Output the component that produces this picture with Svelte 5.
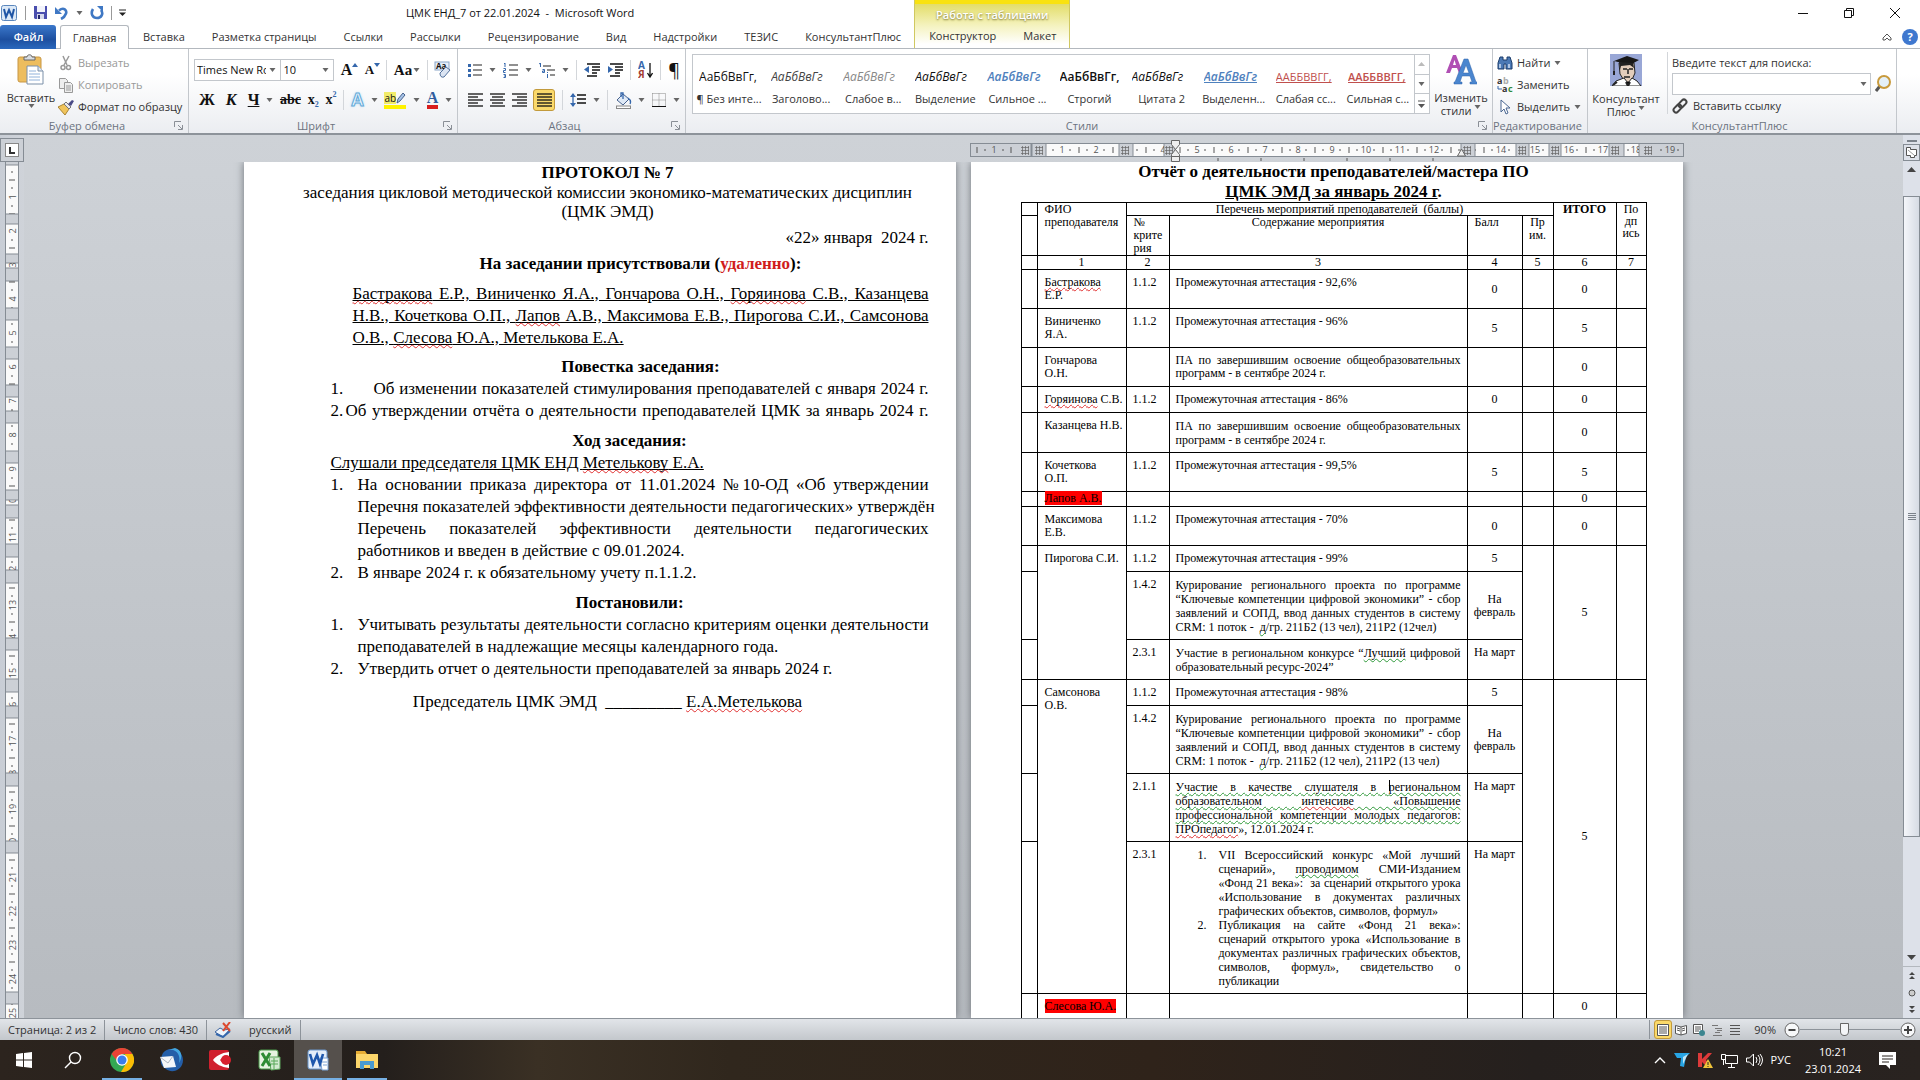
<script>
    const tabs = ['Вставка', 'Разметка страницы', 'Ссылки', 'Рассылки', 'Рецензирование', 'Вид', 'Надстройки', 'ТЕЗИС', 'КонсультантПлюс'];

    const styles = [
        { name: '¶ Без инте...', look: 'plain', sample: 'АаБбВвГг,' },
        { name: 'Заголово...', look: 'heading', sample: 'АаБбВвГг' },
        { name: 'Слабое в...', look: 'subtle', sample: 'АаБбВвГг' },
        { name: 'Выделение', look: 'emphasis', sample: 'АаБбВвГг' },
        { name: 'Сильное ...', look: 'intense', sample: 'АаБбВвГг' },
        { name: 'Строгий', look: 'strong', sample: 'АаБбВвГг,' },
        { name: 'Цитата 2', look: 'emphasis', sample: 'АаБбВвГг' },
        { name: 'Выделенн...', look: 'intense lined', sample: 'АаБбВвГг' },
        { name: 'Слабая сс...', look: 'reference', sample: 'ААББВВГГ,' },
        { name: 'Сильная с...', look: 'reference bold', sample: 'ААББВВГГ,' },
    ];

    // ~word~ is a spelling mark, ^word^ is a grammar mark
    const attendees = [
        '~Бастракова~ Е.Р., Виниченко Я.А., Гончарова О.Н., ~Горяинова~ С.В., Казанцева',
        'Н.В., Кочеткова О.П., ~Лапов~ А.В., Максимова Е.В., Пирогова С.И., Самсонова',
        'О.В., ~Слесова~ Ю.А., Метелькова Е.А.',
    ];

    const course = [
        [
            'На основании приказа директора от 11.01.2024 №10-ОД «Об утверждении',
            'Перечня показателей эффективности деятельности педагогических» утверждён',
            'Перечень показателей эффективности деятельности педагогических',
            'работников и введен в действие с 09.01.2024.',
        ],
        ['В январе 2024 г. к обязательному учету п.1.1.2.'],
    ];

    const decisions = [
        [
            'Учитывать результаты деятельности согласно критериям оценки деятельности',
            'преподавателей в надлежащие месяцы календарного года.',
        ],
        ['Утвердить отчет о деятельности преподавателей за январь 2024 г.'],
    ];

    const exam = (value) => ({ code: '1.1.2', lines: ['Промежуточная аттестация - ' + value] });
    const september = { code: '', lines: ['ПА по завершившим освоение общеобразовательных', 'программ - в сентябре 2024 г.'], score: '' };
    const project = (tail) => ({
        code: '1.4.2',
        tall: true,
        lines: [
            'Курирование регионального проекта по программе',
            '“Ключевые компетенции цифровой экономики” - сбор',
            'заявлений и СОПД, ввод данных студентов в систему',
            'CRM: 1 поток - \u00a0^д^/гр. ' + tail,
        ],
        score: 'На февраль',
    });

    const people = [
        { name: ['~Бастракова~', 'Е.Р.'], total: '0', items: [{ ...exam('92,6%'), score: '0' }] },
        { name: ['Виниченко', 'Я.А.'], total: '5', items: [{ ...exam('96%'), score: '5' }] },
        { name: ['Гончарова', 'О.Н.'], total: '0', items: [september] },
        { name: ['~Горяинова~ С.В.'], total: '0', items: [{ ...exam('86%'), score: '0' }] },
        { name: ['Казанцева Н.В.'], total: '0', items: [{ ...september, tall: true }] },
        { name: ['Кочеткова', 'О.П.'], total: '5', items: [{ ...exam('99,5%'), score: '5' }] },
        { name: ['Лапов  А.В.'], absent: true, tight: true, total: '0', items: [{ code: '', lines: [], score: '' }] },
        { name: ['Максимова', 'Е.В.'], total: '0', items: [{ ...exam('70%'), score: '0' }] },
        {
            name: ['Пирогова С.И.'],
            total: '5',
            items: [
                { ...exam('99%'), score: '5' },
                project('211Б2 (13 чел), 211Р2 (12чел)'),
                {
                    code: '2.3.1',
                    tall: true,
                    top: true,
                    lines: ['Участие в региональном конкурсе “^Лучший^ цифровой', 'образовательный ресурс-2024”'],
                    score: 'На март',
                },
            ],
        },
        {
            name: ['Самсонова', 'О.В.'],
            total: '5',
            items: [
                { ...exam('98%'), score: '5' },
                project('211Б2 (12 чел), 211Р2 (13 чел)'),
                {
                    code: '2.1.1',
                    tall: true,
                    top: true,
                    lines: [
                        '^Участие в качестве слушателя в |региональном^',
                        '^образовательном ^~интенсиве~^ «Повышение^',
                        '^профессиональной компетенции молодых педагогов:^',
                        '~ПРОпедагог~», 12.01.2024 г.',
                    ],
                    score: 'На март',
                },
                {
                    code: '2.3.1',
                    tall: true,
                    top: true,
                    list: [
                        [
                            'VII Всероссийский конкурс «Мой лучший',
                            'сценарий», ^проводимом^ СМИ-Изданием',
                            '«Фонд 21 века»: \u00a0за сценарий открытого урока',
                            '«Использование в документах различных',
                            'графических объектов, символов, формул»',
                        ],
                        [
                            'Публикация на сайте «Фонд 21 века»:',
                            'сценарий открытого урока «Использование в',
                            'документах различных графических объектов,',
                            'символов, формул», свидетельство о',
                            'публикации',
                        ],
                    ],
                    score: 'На март',
                },
            ],
        },
        { name: ['Слесова Ю.А.'], absent: true, total: '0', items: [{ code: '', lines: [], score: '' }] },
    ];

    function parts(text) {
        return text
            .split(/(~[^~]+~|\^[^^]+\^)/)
            .filter((part) => part)
            .map((part) => {
                if (part[0] == '~') return { kind: 'spell', text: part.slice(1, -1) };
                if (part[0] == '^') return { kind: 'grammar', text: part.slice(1, -1) };
                return { kind: '', text: part };
            });
    }

    // ruler geometry
    const step = 34;
    const topMarks = Array.from({ length: 20 }, (_, i) => Math.round(58 + i * 33.8));
    const topCells = [[76, 73], [163, 31], [205, 286], [505, 41], [559, 20], [591, 48], [654, 15]];
    const topGrids = [49, 63, 149, 193, 491, 546, 579, 639, 672];
    const tableTicks = [248, 291, 334, 377, 420, 463];
    const sideMarks = Array.from({ length: 26 }, (_, i) => i);
    const sideCells = [
        [3, 49], [62, 30], [101, 5], [119, 27], [158, 27], [197, 26], [235, 14], [261, 28], [301, 27], [338, 5],
        [356, 26], [395, 13], [421, 55], [488, 29], [530, 14], [556, 55], [624, 55], [691, 139], [842, 20],
    ];

    let zoom = $state(90);
    let query = $state('');
</script>

{#snippet down()}
    <svg class="down" width="7" height="4" viewBox="0 0 7 4"><path d="M0.5 0h6L3.5 4z" fill="#666" /></svg>
{/snippet}

{#snippet launcher()}
    <svg class="launcher" width="9" height="9" viewBox="0 0 9 9" fill="none" stroke="#8a8f96"><path d="M0.5 6V.5H7M4 4l4 4M8.500 4v4.500H4" /></svg>
{/snippet}

{#snippet marked(text)}
    {#each parts(text) as part}{#if part.kind}<span class={part.kind}>{#each part.text.split('|') as bit, i}{#if i}<span class="caret"></span>{/if}{bit}{/each}</span>{:else}{part.text}{/if}{/each}
{/snippet}

{#snippet lines(list)}
    {#each list as line, i}
        <span class="line" class:fill={i < list.length - 1}>{@render marked(line)}</span>
    {/each}
{/snippet}

{#snippet alignIcon(kind)}
    <svg width="15" height="14" viewBox="0 0 15 14" stroke="#111" stroke-width="1.300">
        {#each [0, 1, 2, 3, 4] as row}
            {@const short = row % 2 && kind != 'full'}
            <path d="M{short && kind == 'right' ? 5 : short && kind == 'center' ? 2 : 0} {row * 3 + 1}H{short && kind == 'left' ? 10 : short && kind == 'center' ? 13 : 15}" />
        {/each}
    </svg>
{/snippet}

<div class="word">
    <header>
        <div class="head-left">
            <div class="title-row">
                <div class="quick">
                    <svg width="17" height="18" viewBox="0 0 17 18"><rect x=".5" y="1.500" width="15" height="15" rx="2" fill="#dce9f7" stroke="#5b87bd" /><path d="M3 5l2 8 3-7 3 7 2-8" fill="none" stroke="#1f55a5" stroke-width="2" /></svg>
                    <span class="bar"></span>
                    <button aria-label="Сохранить"><svg width="15" height="15" viewBox="0 0 15 15"><path d="M1 1h13v13H2l-1-1z" fill="#4a4eae" /><path d="M4 1h8v6H4z" fill="#f2f3fb" /><path d="M4 9h7v5H4z" fill="#d5d8ec" /><path d="M5 10h2v4H5z" fill="#25286c" /></svg></button>
                    <button aria-label="Отменить"><svg width="14" height="14" viewBox="0 0 14 14" fill="none"><path d="M4 4.500c5-4 8 0 7 3-.7 2-2 4-5 5.500" stroke="#3f78c4" stroke-width="2.600" /><path d="M0 1v7h7z" fill="#3f78c4" /></svg></button>
                    {@render down()}
                    <button aria-label="Вернуть"><svg width="14" height="14" viewBox="0 0 14 14" fill="none"><path d="M3 3c-3 5 0 9 4 9s7-4 4-8" stroke="#3f78c4" stroke-width="2.600" /><path d="M7 0h6v6z" fill="#3f78c4" /></svg></button>
                    <span class="bar"></span>
                    <svg width="7" height="8" viewBox="0 0 7 8"><path d="M0 1h7" stroke="#222" /><path d="M0 3.500h7L3.500 7z" fill="#222" /></svg>
                </div>
                <h1>ЦМК ЕНД_7 от 22.01.2024 &nbsp;- &nbsp;Microsoft Word</h1>
            </div>
            <nav class="tabs">
                <button class="file">Файл</button>
                <button class="current">Главная</button>
                {#each tabs as tab}
                    <button>{tab}</button>
                {/each}
            </nav>
        </div>
        <div class="context">
            <span class="context-title">Работа с таблицами</span>
            <div class="tabs"><button>Конструктор</button><button>Макет</button></div>
        </div>
        <div class="head-right">
            <div class="window-buttons">
                <button aria-label="Свернуть"><svg width="12" height="12" viewBox="0 0 12 12" stroke="#111"><path d="M1 6.500h10" /></svg></button>
                <button aria-label="Развернуть"><svg width="12" height="12" viewBox="0 0 12 12" stroke="#111" fill="none"><path d="M1.500 3.500h7v7h-7zM3.500 3V1.500h7v7H9" /></svg></button>
                <button aria-label="Закрыть"><svg width="12" height="12" viewBox="0 0 12 12" stroke="#111"><path d="M1 1l10 10M11 1L1 11" /></svg></button>
            </div>
            <div class="help">
                <svg width="10" height="8" viewBox="0 0 10 8" fill="#fff" stroke="#555"><path d="M5 1L1 5v2h2l2-2 2 2h2V5z" /></svg>
                <button class="help-button" aria-label="Справка">?</button>
            </div>
        </div>
    </header>

    <div class="ribbon">
        <section class="group clipboard">
            <div class="body">
                <button class="big">
                    <svg width="28" height="31" viewBox="0 0 28 31"><rect x="1" y="3" width="23" height="25" rx="2" fill="#edbd5e" stroke="#c79644" /><path d="M7 5V3h3c0-3 5-3 5 0h3v3H7z" fill="#d9dde2" stroke="#666" /><path d="M10 12h11l5 5v13H10z" fill="#fff" stroke="#7b8fa8" /><path d="M21 12v5h5" fill="#dfe8f3" stroke="#7b8fa8" /><path d="M12 17h7M12 20h11M12 23h11M12 26h11" stroke="#91b2da" /></svg>
                    <span>Вставить</span>
                    {@render down()}
                </button>
                <div class="rows">
                    <button class="row off"><svg width="16" height="16" viewBox="0 0 16 16" fill="none" stroke="#999" stroke-width="1.500"><path d="M5 1l4 9M11 1L6 10" /><circle cx="5" cy="12.500" r="2" /><circle cx="10.500" cy="12.500" r="2" /></svg>Вырезать</button>
                    <button class="row off"><svg width="16" height="16" viewBox="0 0 16 16" fill="#eee" stroke="#999"><path d="M1.500 1.500h6l2 2v8h-8z" /><path d="M6.500 5.500h6l2 2v8h-8z" /><path d="M8 9h5M8 11h5M8 13h5" /></svg>Копировать</button>
                    <button class="row"><svg width="16" height="16" viewBox="0 0 16 16"><path d="M0 8l6-3 5 5-4 6z" fill="#f0c45c" stroke="#a88434" /><path d="M6 5l2-2 5 5-2 2z" fill="#e8e8ee" stroke="#777" /><path d="M10 5l4-4 2 1-3 5z" fill="#4a4a86" /></svg>Формат по образцу</button>
                </div>
            </div>
            <footer><span>Буфер обмена</span>{@render launcher()}</footer>
        </section>

        <section class="group font">
            <div class="body tools">
                <div class="tool-row">
                    <span class="combo family"><select aria-label="Шрифт"><option>Times New Roman</option></select>{@render down()}</span>
                    <span class="combo size"><select aria-label="Размер шрифта"><option>10</option></select>{@render down()}</span>
                    <button class="serif grow">A<svg width="6" height="4" viewBox="0 0 6 4"><path d="M0 4h6L3 0z" fill="#3567ac" /></svg></button>
                    <button class="serif shrink">A<svg width="6" height="4" viewBox="0 0 6 4"><path d="M0 0h6L3 4z" fill="#3567ac" /></svg></button>
                    <i class="sep"></i>
                    <button class="serif case">Aa{@render down()}</button>
                    <i class="sep"></i>
                    <button aria-label="Очистить формат"><svg width="18" height="18" viewBox="0 0 18 18"><rect x="1" y="1" width="14" height="8" fill="#e7eef8" stroke="#8aa5c8" /><text x="2" y="8" font-size="8" font-weight="bold" fill="#111">Aa</text><path d="M6 12l6-6 4 3-6 7q-4 1-4-4z" fill="#dce5f3" stroke="#53719d" /></svg></button>
                </div>
                <div class="tool-row wide">
                    <div class="letters">
                        <button class="serif">Ж</button>
                        <button class="serif"><em>К</em></button>
                        <button class="serif"><u>Ч</u></button>
                    </div>
                    {@render down()}
                    <button class="serif small"><s>abc</s></button>
                    <button class="serif small">x<sub>2</sub></button>
                    <button class="serif small">x<sup>2</sup></button>
                    <i class="sep"></i>
                    <button class="glow">A</button>
                    {@render down()}
                    <button class="marker"><span>ab</span><svg width="10" height="12" viewBox="0 0 10 12"><path d="M1 11l1-4 5-6 2 2-5 6z" fill="#a6c2e6" stroke="#47628d" /></svg></button>
                    {@render down()}
                    <button class="serif tint">A</button>
                    {@render down()}
                </div>
            </div>
            <footer><span>Шрифт</span>{@render launcher()}</footer>
        </section>

        <section class="group paragraph">
            <div class="body tools">
                <div class="tool-row wide">
                    <button aria-label="Маркеры"><svg width="14" height="14" viewBox="0 0 14 14"><path d="M5 2h9M5 7h9M5 12h9" stroke="#222" stroke-width="1.200" /><path d="M0 1h3v3H0zM0 6h3v3H0zM0 11h3v3H0z" fill="#3567ac" /></svg></button>
                    {@render down()}
                    <button aria-label="Нумерация"><svg width="15" height="15" viewBox="0 0 15 15"><path d="M6 2h9M6 7h9M6 12h9" stroke="#222" stroke-width="1.200" /><path d="M1 1l1-1v4M.5 5.500h2v2h-2v2h2M.5 11.500h2v3h-2M1 13h1" fill="none" stroke="#3567ac" /></svg></button>
                    {@render down()}
                    <button aria-label="Многоуровневый список"><svg width="16" height="15" viewBox="0 0 16 15"><path d="M4 3h8M8 7h8M11 12h5" stroke="#222" stroke-width="1.200" /><path d="M0 1l1.500-1v4M3.500 6.500h2v3h-2v-1.500h2M8.500 11v4M8.500 9v1" fill="none" stroke="#3567ac" /></svg></button>
                    {@render down()}
                    <i class="sep"></i>
                    <button aria-label="Уменьшить отступ"><svg width="16" height="14" viewBox="0 0 16 14"><path d="M3 1h13M8 4h8M8 7h8M8 10h5M3 13h10" stroke="#111" stroke-width="1.500" /><path d="M5 3v7L0 6.500z" fill="#3567ac" /></svg></button>
                    <button aria-label="Увеличить отступ"><svg width="16" height="14" viewBox="0 0 16 14"><path d="M3 1h13M8 4h8M8 7h8M8 10h5M3 13h10" stroke="#111" stroke-width="1.500" /><path d="M1 3v7l5-3.500z" fill="#3567ac" /></svg></button>
                    <i class="sep"></i>
                    <button aria-label="Сортировка"><svg width="15" height="18" viewBox="0 0 15 18"><g font-size="10" font-weight="bold"><text x="0" y="8" fill="#3567ac">А</text><text x="0" y="17" fill="#a33d33">Я</text></g><path d="M12 2v13M9.500 12l2.500 4 2.500-4" fill="none" stroke="#111" stroke-width="1.300" /></svg></button>
                    <i class="sep"></i>
                    <button class="pilcrow">¶</button>
                </div>
                <div class="tool-row wide">
                    <button aria-label="По левому краю">{@render alignIcon('left')}</button>
                    <button aria-label="По центру">{@render alignIcon('center')}</button>
                    <button aria-label="По правому краю">{@render alignIcon('right')}</button>
                    <button class="on" aria-label="По ширине">{@render alignIcon('full')}</button>
                    <i class="sep"></i>
                    <button aria-label="Интервал"><svg width="16" height="16" viewBox="0 0 16 16"><path d="M7 3h9M7 7h9M7 11h9" stroke="#111" stroke-width="1.300" /><path d="M3 2v12" stroke="#3567ac" stroke-width="1.300" /><path d="M0 5l3-4 3 4zM0 11l3 4 3-4z" fill="#3567ac" /></svg></button>
                    {@render down()}
                    <i class="sep"></i>
                    <button aria-label="Заливка"><svg width="17" height="17" viewBox="0 0 17 17"><path d="M2 8l6-6 6 5-6 6z" fill="#dfe9f6" stroke="#47628d" /><path d="M6 5V1h2v6M13 6c3 2 3 4 2 6" fill="none" stroke="#3567ac" stroke-width="1.300" /><rect x="1.500" y="14" width="14" height="2.500" fill="#fff" stroke="#888" /></svg></button>
                    {@render down()}
                    <button aria-label="Границы"><svg width="14" height="14" viewBox="0 0 14 14" fill="none" stroke="#888"><path d="M.5.5h13v13M.5.5v13M7 .5v13M.5 7h13" stroke-dasharray="1 1" /><path d="M0 13.500h14" stroke="#111" /></svg></button>
                    {@render down()}
                </div>
            </div>
            <footer><span>Абзац</span>{@render launcher()}</footer>
        </section>

        <section class="group gallery-group">
            <div class="body">
                <div class="gallery">
                    {#each styles as style}
                        <button class="style"><span class="sample {style.look}">{style.sample}</span><span>{style.name}</span></button>
                    {/each}
                    <div class="scroller">
                        <button aria-label="Вверх"><svg width="7" height="4" viewBox="0 0 7 4"><path d="M0 4h7L3.500 0z" fill="#bbb" /></svg></button>
                        <button aria-label="Вниз">{@render down()}</button>
                        <button aria-label="Все стили"><svg width="7" height="8" viewBox="0 0 7 8"><path d="M0 1h7" stroke="#555" /><path d="M0 4h7L3.500 8z" fill="#555" /></svg></button>
                    </div>
                </div>
                <button class="big">
                    <svg width="32" height="31" viewBox="0 0 32 31"><path d="M1 19L8 1h3l7 18h-4l-2-5H7l-2 5zM8 11h3L9.500 6z" fill="#b04fb4" /><path d="M10 28L19 5h4l8 23h2v2h-8v-2h2l-2-6h-8l-2 6h2v2H9v-2zM18 19h6l-3-8z" fill="#4a86cf" stroke="#2e62a8" stroke-width=".5" /></svg>
                    <span>Изменить</span>
                    <span>стили {@render down()}</span>
                </button>
            </div>
            <footer><span>Стили</span>{@render launcher()}</footer>
        </section>

        <section class="group editing">
            <div class="body">
                <div class="rows">
                    <button class="row"><svg width="16" height="14" viewBox="0 0 16 14"><path d="M3 1h3v3h4V1h3l2 6v6H9V8H7v5H1V7z" fill="#4b79b5" stroke="#1c3d6b" /><path d="M3 8v4M12 8v4" stroke="#cfe0f5" stroke-width="1.500" /></svg>Найти {@render down()}</button>
                    <button class="row"><svg width="16" height="16" viewBox="0 0 16 16"><g font-size="9" font-weight="bold"><text x="0" y="7" fill="#333">a</text><text x="6" y="7" fill="#aaa">b</text><text x="5" y="15" fill="#333">a</text><text x="11" y="15" fill="#2f8a3a">c</text></g><path d="M1 9v3h4" fill="none" stroke="#3567ac" /></svg>Заменить</button>
                    <button class="row"><svg width="16" height="16" viewBox="0 0 16 16"><path d="M4 1v12l3-3 2 5 2-1-2-5h4z" fill="#fff" stroke="#4a6791" /></svg>Выделить {@render down()}</button>
                </div>
            </div>
            <footer><span>Редактирование</span></footer>
        </section>

        <section class="group consultant">
            <div class="body">
                <button class="big">
                    <svg width="32" height="32" viewBox="0 0 32 32"><rect width="32" height="32" fill="#99a7d6" /><path d="M9 9h15l1 10-4 9h-6l-5-8z" fill="#e3cdbb" stroke="#222" /><path d="M4 7l13-5 12 4-9 5z" fill="#181818" /><path d="M9 8l14 1 1 5-4-3-9 1-1 4z" fill="#222" /><path d="M4 7v11" stroke="#222" /><path d="M3 17h2v4H3z" fill="#222" /><path d="M13 15h4M19 15h4M18 15v5M14 23h6" stroke="#222" stroke-width="1.500" /><path d="M2 32l4-5 8-3 4 5 4-5 5 3 4 5z" fill="#fff" stroke="#222" /><path d="M16 28l2 4 2-4M3 31l4-3" stroke="#222" stroke-width="2" /></svg>
                    <span>Консультант</span>
                    <span>Плюс {@render down()}</span>
                </button>
                <i class="sep long"></i>
                <div class="rows search">
                    <label for="query">Введите текст для поиска:</label>
                    <div class="search-row">
                        <span class="search-box"><input id="query" type="text" bind:value={query} /><button aria-label="История">{@render down()}</button></span>
                        <button aria-label="Найти"><svg width="17" height="18" viewBox="0 0 17 18"><path d="M5 11l-4 5" stroke="#555" stroke-width="3" /><circle cx="9" cy="7" r="6" fill="#e4f0f8" stroke="#c89a3c" stroke-width="2" /></svg></button>
                    </div>
                    <button class="row link"><svg width="17" height="17" viewBox="0 0 17 17" fill="none" stroke="#444" stroke-width="2"><rect x="1" y="8" width="9" height="5" rx="2.500" transform="rotate(-45 5.500 10.500)" /><rect x="6" y="3" width="9" height="5" rx="2.500" transform="rotate(-45 10.500 5.500)" /></svg>Вставить ссылку</button>
                </div>
            </div>
            <footer><span>КонсультантПлюс</span></footer>
        </section>
    </div>

    <main>
        <aside>
            <button class="tab-kind" aria-label="Позиция табуляции"><svg width="14" height="14" viewBox="0 0 14 14"><rect x=".5" y=".5" width="13" height="13" fill="#fff" stroke="#888" /><path d="M5 4v6h5" fill="none" stroke="#333" stroke-width="2" /></svg></button>
            <svg class="side-ruler" width="14" height="862" viewBox="0 0 14 862">
                <clipPath id="side-cells">{#each sideCells as cell}<rect x="0" y={cell[0]} width="14" height={cell[1]} />{/each}</clipPath>
                <rect width="14" height="862" fill="#ccd0d6" />
                {#each sideCells as cell}<rect x=".5" y={cell[0]} width="13" height={cell[1]} fill="#fafafa" stroke="#858c94" />{/each}
                <g clip-path="url(#side-cells)">
                    {#each sideMarks as n}
                        {#if n}<text transform="translate(11 {1 + n * step}) rotate(-90)">{n}</text>{/if}
                        <path d="M6 {n * step + 10}h2M4 {n * step + 18}h6M6 {n * step + 26}h2" stroke="#555" />
                    {/each}
                </g>
                <path d="M.5 0v862M13.500 0v862" stroke="#858c94" />
            </svg>
        </aside>

        <div class="desk">
            <article class="page">
                <h2>ПРОТОКОЛ № 7</h2>
                <p class="subject">заседания цикловой методической комиссии экономико-математических дисциплин<br />(ЦМК ЭМД)</p>
                <p class="date">«22» января &nbsp;2024 г.</p>
                <section class="present">
                    <h3>На заседании присутствовали (<span class="remote">удаленно</span>):</h3>
                    <p class="names">{@render lines(attendees)}</p>
                    <h3>Повестка заседания:</h3>
                </section>
                <section class="minutes">
                    <ol>
                        <li class="agenda-first"><span>1.</span><span class="line fill">Об изменении показателей стимулирования преподавателей с января 2024 г.</span></li>
                        <li class="agenda-second"><span>2.</span><span class="line fill">Об утверждении отчёта о деятельности преподавателей ЦМК за январь 2024 г.</span></li>
                    </ol>
                    <h3>Ход заседания:</h3>
                    <p><u>Слушали председателя ЦМК ЕНД <span class="spell">Метелькову</span> Е.А.</u></p>
                    <ol>
                        {#each course as item, i}
                            <li><span>{i + 1}.</span><span>{@render lines(item)}</span></li>
                        {/each}
                    </ol>
                    <h3>Постановили:</h3>
                    <ol>
                        {#each decisions as item, i}
                            <li><span>{i + 1}.</span><span>{@render lines(item)}</span></li>
                        {/each}
                    </ol>
                </section>
                <p class="signature">Председатель ЦМК ЭМД &nbsp;_________ <span class="spell">Е.А.Метелькова</span></p>
            </article>

            <div class="sheet">
                <svg class="top-ruler" width="714" height="27" viewBox="0 0 714 27">
                    <clipPath id="top-clip"><rect x="0" y="8" width="47" height="13" />{#each topCells as cell}<rect x={cell[0]} y="8" width={cell[1]} height="13" />{/each}<rect x="686" y="8" width="28" height="13" /></clipPath>
                    <rect x=".5" y="8.500" width="713" height="13" fill="#ccd0d6" stroke="#858c94" />
                    {#each topCells as cell}<rect x={cell[0]} y="8.500" width={cell[1]} height="13" fill="#fafafa" stroke="#858c94" />{/each}
                    <g clip-path="url(#top-clip)">
                        {#each topMarks as x, n}
                            {#if n}<text {x} y="18">{n}</text>{/if}
                            <path d="M{x + 8} 14v2M{x + 17} 12v6M{x + 25} 14v2" stroke="#555" />
                        {/each}
                        <text x="24" y="18">1</text>
                        <path d="M7 12v6M15 14v2M33 14v2M41 12v6" stroke="#555" />
                    </g>
                    {#each topGrids as x}<path d="M{x + 2} 12.500h8M{x + 2} 15.500h8M{x + 2} 18.500h8M{x + 3.5} 11v9M{x + 6.5} 11v9M{x + 9.5} 11v9" stroke="#666" stroke-width=".7" />{/each}
                    {#each tableTicks as x}<path d="M{x} 23v3" stroke="#555" />{/each}
                    <path d="M61.500 8v13" stroke="#858c94" stroke-width="2" />
                    <path d="M201.500 5.500h8v4l-4 5 4 5v2h-8v-2l4-5-4-5zM201.500 21.500h8v5h-8zM487.500 21l4-7 4 7z" fill="#eee" stroke="#666" />
                </svg>
                <article class="page report">
                    <h2>Отчёт о деятельности преподавателей/мастера ПО<br /><u>ЦМК ЭМД за январь 2024 г</u>.</h2>
                    <table>
                        <colgroup><col class="c0" /><col class="c1" /><col class="c2" /><col class="c3" /><col class="c4" /><col class="c5" /><col class="c6" /><col class="c7" /></colgroup>
                        <thead>
                            <tr class="first"><td></td><th rowspan="2" class="name">ФИО преподавателя</th><th colspan="4">Перечень мероприятий преподавателей &nbsp;(баллы)</th><th rowspan="2"><b>ИТОГО</b></th><th rowspan="2">По<br />дп<br />ись</th></tr>
                            <tr><td></td><th class="code">№<br />крите<br />рия</th><th>Содержание мероприятия</th><th class="name">Балл</th><th>Пр<br />им.</th></tr>
                            <tr><td></td><th>1</th><th>2</th><th>3</th><th>4</th><th>5</th><th>6</th><th>7</th></tr>
                        </thead>
                        <tbody>
                            {#each people as person}
                                {#each person.items as item, i}
                                    <tr class:tight={person.tight}>
                                        <td></td>
                                        {#if i == 0}
                                            <td class="person" rowspan={person.items.length}>
                                                {#each person.name as line}<span class="line"><span class:absent={person.absent}>{@render marked(line)}</span></span>{/each}
                                            </td>
                                        {/if}
                                        <td>{item.code}</td>
                                        <td class="what" class:tall={item.tall}>
                                            {#if item.list}
                                                <ol>
                                                    {#each item.list as entry, n}
                                                        <li><span>{n + 1}.</span><span>{@render lines(entry)}</span></li>
                                                    {/each}
                                                </ol>
                                            {:else}
                                                {@render lines(item.lines)}
                                            {/if}
                                        </td>
                                        <td class="score" class:top={item.top}>{item.score}</td>
                                        {#if i == 0}
                                            <td rowspan={person.items.length}></td>
                                            <td class="score" rowspan={person.items.length}>{person.total}</td>
                                            <td rowspan={person.items.length}></td>
                                        {/if}
                                    </tr>
                                {/each}
                            {/each}
                        </tbody>
                    </table>
                </article>
            </div>
        </div>

        <div class="scrollbar">
            <i class="split"></i>
            <button class="ruler-toggle" aria-label="Линейка"><svg width="13" height="13" viewBox="0 0 13 13" fill="#fff" stroke="#555"><path d="M1.500 1.500h4v2h6v6h-2v2h-4v-2h-4z" /><path d="M3 4l6 5" stroke="#999" /></svg></button>
            <button aria-label="Вверх"><svg width="9" height="5" viewBox="0 0 9 5"><path d="M0 5h9L4.500 0z" fill="#444" /></svg></button>
            <div class="track"><div class="thumb"><svg width="8" height="8" viewBox="0 0 8 8" stroke="#7b828b"><path d="M0 .5h8M0 2.500h8M0 4.500h8M0 6.500h8" /></svg></div></div>
            <button aria-label="Вниз"><svg width="9" height="5" viewBox="0 0 9 5"><path d="M0 0h9L4.500 5z" fill="#444" /></svg></button>
            <div class="browse">
                <button aria-label="Предыдущая"><svg width="6" height="7" viewBox="0 0 6 7" fill="#444"><path d="M0 3h6L3 0zM0 7h6L3 4z" /></svg></button>
                <button aria-label="Объект"><svg width="8" height="8" viewBox="0 0 8 8"><circle cx="4" cy="4" r="3" fill="#ccc" stroke="#555" /></svg></button>
                <button aria-label="Следующая"><svg width="6" height="7" viewBox="0 0 6 7" fill="#444"><path d="M0 0h6L3 3zM0 4h6L3 7z" /></svg></button>
            </div>
        </div>
    </main>

    <div class="status">
        <span class="cell">Страница: 2 из 2</span>
        <span class="cell">Число слов: 430</span>
        <span class="cell"><svg width="17" height="16" viewBox="0 0 17 16"><path d="M0 10l5-4 4 2 6-1-7 8z" fill="#eef4fb" stroke="#3e65a0" /><path d="M1 12l7 3 7-6" fill="none" stroke="#3567ac" stroke-width="2" /><path d="M8 1l7 8M15 0L8 9" stroke="#dc4a30" stroke-width="2" /></svg><span class="language">русский</span></span>
        <span class="spacer"></span>
        <div class="views">
            <button class="on" aria-label="Разметка страницы"><svg width="12" height="12" viewBox="0 0 12 12" fill="#fff" stroke="#555"><path d="M.5.5h11v11H.5zM2 3h8M2 5h8M2 7h8M2 9h8" /></svg></button>
            <button aria-label="Чтение"><svg width="12" height="12" viewBox="0 0 12 12" fill="#fff" stroke="#555"><path d="M.5 1.500L6 3l5.500-1.500v8L6 11 .5 9.500zM6 3v8M2 4l3 1M2 6l3 1M7 5l3-1M7 7l3-1" /></svg></button>
            <button aria-label="Веб-документ"><svg width="12" height="12" viewBox="0 0 12 12"><path d="M.5.5h9v9h-9zM2 3h6M2 5h6M2 7h4" fill="#fff" stroke="#555" /><circle cx="9" cy="9" r="3" fill="#3c8690" /></svg></button>
            <button aria-label="Структура"><svg width="12" height="12" viewBox="0 0 12 12" stroke="#777"><path d="M1 1.500h6M4 4.500h7M6 6.500h5M4 8.500h5M2 11.500h9" /></svg></button>
            <button aria-label="Черновик"><svg width="12" height="12" viewBox="0 0 12 12" stroke="#555"><path d="M1 1.500h10M1 4.500h10M1 7.500h10M1 10.500h10" /></svg></button>
        </div>
        <span class="percent">{zoom}%</span>
        <div class="zoom">
            <button aria-label="Уменьшить"><svg width="16" height="16" viewBox="0 0 16 16" fill="#f7f8f9" stroke="#666"><circle cx="8" cy="8" r="7" /><path d="M4.500 8h7" stroke="#444" stroke-width="2" /></svg></button>
            <input type="range" min="10" max="190" bind:value={zoom} aria-label="Масштаб" />
            <button aria-label="Увеличить"><svg width="16" height="16" viewBox="0 0 16 16" fill="#f7f8f9" stroke="#666"><circle cx="8" cy="8" r="7" /><path d="M4 8h8M8 4v8" stroke="#444" stroke-width="2" /></svg></button>
        </div>
    </div>

    <div class="taskbar">
        <button aria-label="Пуск"><svg width="16" height="16" viewBox="0 0 16 16" fill="#fff"><path d="M0 2l7-1v6.500H0zM8 1l8-1v7.500H8zM0 8.500h7V15l-7-1zM8 8.500h8V16l-8-1z" /></svg></button>
        <button aria-label="Поиск"><svg width="18" height="18" viewBox="0 0 18 18" fill="none" stroke="#fff" stroke-width="1.400"><circle cx="11" cy="7" r="5.500" /><path d="M7 11l-6 6" /></svg></button>
        <button class="open" aria-label="Chrome"><svg width="24" height="24" viewBox="0 0 24 24"><circle cx="12" cy="12" r="12" fill="#34a853" /><path d="M1.600 6A12 12 0 0 1 22.400 6H12L8 14z" fill="#ea4335" /><path d="M22.400 6A12 12 0 0 1 11 24l6-10-2-8z" fill="#fbbc05" /><circle cx="12" cy="12" r="5.800" fill="#fff" /><circle cx="12" cy="12" r="4.500" fill="#3b7ded" /></svg></button>
        <button aria-label="Thunderbird"><svg width="24" height="24" viewBox="0 0 24 24"><path d="M4 5C10-3 24 2 24 12S13 26 7 21C0 17 1 11 4 5z" fill="#245ea8" /><path d="M9 2c9-2 13 6 11 13 4-6 3-13-4-15z" fill="#43a5e0" /><path d="M1 9l13-1 3 11-12 1z" fill="#f5f7fa" /><path d="M1 9l8 6 5-7" fill="none" stroke="#aab4c2" /></svg></button>
        <button aria-label="Архив"><svg width="22" height="20" viewBox="0 0 22 20"><rect width="20" height="20" rx="2" fill="#d0202e" /><path d="M20 2v5C16 6 13 7 11 10c2 3 5 4 9 3v5C12 17 7 14 4 10 7 6 12 3 20 2z" fill="#fff" /><circle cx="17" cy="10" r="5" fill="#d8202e" /></svg></button>
        <button aria-label="Excel"><svg width="24" height="22" viewBox="0 0 24 22"><rect x="2" y="1" width="19" height="19" rx="2" fill="#e7f3e2" stroke="#4b9a4b" /><path d="M12 8h11v12l-9 1z" fill="#d2ead0" stroke="#5aa45a" /><path d="M14 12h7M14 15h7M17 9v11" stroke="#58a858" /><path d="M5 4l8 13M13 4L5 17" stroke="#2e8b34" stroke-width="3" /></svg></button>
        <button class="open active" aria-label="Word"><svg width="24" height="22" viewBox="0 0 24 22"><rect x="2" y="1" width="19" height="19" rx="2" fill="#e4eefa" stroke="#6b96cc" /><path d="M14 9h8v12h-6z" fill="#fff" stroke="#7ba2d3" /><path d="M16 13h5M17 16h4" stroke="#7ba2d3" /><path d="M4 5l3 10 4-9 3 9 3-10" fill="none" stroke="#1e57ac" stroke-width="2.600" /></svg></button>
        <button class="open" aria-label="Проводник"><svg width="22" height="19" viewBox="0 0 22 19"><path d="M0 0h9l2 3h11v14H0z" fill="#e7ad35" /><path d="M0 3h22v14H0z" fill="#fcd66b" /><path d="M4 10h14v8h-4v-4H8v4H4z" fill="#4a9ad0" /></svg></button>
        <span class="spacer"></span>
        <div class="tray">
            <svg width="12" height="8" viewBox="0 0 12 8" fill="none" stroke="#fff" stroke-width="1.400"><path d="M1 7l5-5 5 5" /></svg>
            <svg width="16" height="16" viewBox="0 0 16 16"><path d="M0 1h16l-4 4-2 10-4-1 1-8H3z" fill="#27a5e5" /><path d="M9 5l5-3-5 10z" fill="#bfe6f8" /></svg>
            <svg width="15" height="16" viewBox="0 0 15 16"><path d="M0 1h4v6l6-6h4L8 8l6 7H9L4 10v5H0z" fill="#dd3a3a" /><path d="M10 7l5 9H5z" fill="#f0c43a" /><path d="M10 10v3M10 14v1" stroke="#222" /></svg>
            <svg width="17" height="15" viewBox="0 0 17 15" fill="none" stroke="#fff"><path d="M4.500 2.500h12v8h-12zM10.500 11v3M7 14.500h7M.5 1.500h4v5h-4zM2.500 7v5" /></svg>
            <svg width="17" height="14" viewBox="0 0 17 14" fill="none" stroke="#fff"><path d="M.5 5h3l4-4v12l-4-4h-3zM10 4q2 3 0 6M12 2q4 5 0 10M14 1q5 6 0 12" /></svg>
            <span>РУС</span>
            <time><span>10:21</span><span>23.01.2024</span></time>
            <svg width="17" height="17" viewBox="0 0 17 17"><path d="M0 0h17v13h-6v4l-4-4H0z" fill="#fff" /><path d="M3 4h11M3 7h11M3 10h7" stroke="#29231f" /></svg>
        </div>
    </div>
</div>

<style>
    :global(body) {
        margin: 0;
    }

    .word {
        display: flex;
        flex-direction: column;
        height: 100vh;
        overflow: hidden;
        background: #fff;
        color: #333;
        font: 11px/16px 'Open Sans', 'Noto Sans', sans-serif;
        white-space: nowrap;
    }

    button,
    input,
    select {
        margin: 0;
        padding: 0;
        border: 0;
        background: none;
        color: inherit;
        font: inherit;
    }

    button {
        display: flex;
        align-items: center;
        justify-content: center;
    }

    svg {
        flex: none;
    }

    h1,
    h2,
    h3,
    p,
    ol {
        margin: 0;
        padding: 0;
        list-style: none;
    }

    header {
        display: flex;
        flex: none;
        height: 48px;
        border-bottom: 1px solid #b3b8be;
    }

    .title-row {
        display: flex;
        align-items: center;
        height: 25px;
    }

    .quick {
        display: flex;
        align-items: center;
        gap: 7px;
        padding-left: 1px;
    }

    .bar {
        width: 1px;
        height: 14px;
        background: #999;
    }

    h1 {
        flex: 1;
        color: #111;
        font-size: 11px;
        font-weight: 400;
        text-align: center;
    }

    .tabs {
        display: flex;
        height: 24px;
    }

    .tabs button {
        padding: 0 13px 0 14px;
    }

    .tabs .file {
        width: 56px;
        margin-right: 4px;
        border-radius: 3px 3px 0 0;
        background: linear-gradient(#3b78cb, #1d4f9f 60%, #2a68bd);
        color: #fff;
        font-weight: 600;
    }

    .tabs .current {
        box-sizing: border-box;
        width: 69px;
        padding: 0;
        border: 1px solid #b3b8be;
        border-bottom: 0;
        border-radius: 3px 3px 0 0;
        background: #fff;
    }

    .context {
        display: flex;
        flex-direction: column;
        justify-content: flex-end;
        border: solid #d0c860;
        border-width: 0 1px;
        background: linear-gradient(#f9e20f 4px, #e3dd68 4px, #f4f2bd 25px, #fff 44px);
    }

    .context-title {
        flex: 1;
        padding-top: 7px;
        color: #fff;
        font-weight: 600;
        text-align: center;
        text-shadow: 0 1px 2px #77712a;
    }

    .head-right {
        flex: 1;
    }

    .window-buttons,
    .help {
        display: flex;
        justify-content: flex-end;
        align-items: center;
        height: 25px;
        padding-right: 2px;
    }

    .window-buttons button {
        width: 46px;
        height: 25px;
    }

    .help {
        gap: 10px;
        height: 23px;
    }

    .help-button {
        width: 16px;
        height: 16px;
        border-radius: 50%;
        background: #3f78cf;
        color: #fff;
        font-weight: 700;
    }

    .ribbon {
        display: flex;
        flex: none;
        height: 84px;
        border-bottom: 2px solid #8d939a;
        background: linear-gradient(#fff 30%, #ebedf1);
    }

    .group {
        display: flex;
        flex-direction: column;
        box-sizing: border-box;
        border-right: 1px solid #c3c7cc;
    }

    .clipboard {
        width: 189px;
    }

    .font {
        width: 269px;
    }

    .paragraph {
        width: 228px;
    }

    .gallery-group {
        flex: 1;
    }

    .editing {
        width: 95px;
    }

    .consultant {
        width: 309px;
        margin-right: 23px;
    }

    .body {
        display: flex;
        flex: 1;
        padding: 3px 4px 0;
    }

    footer {
        display: flex;
        align-items: center;
        height: 15px;
        padding-right: 5px;
        color: #6c7380;
    }

    footer span {
        flex: 1;
        text-align: center;
    }

    .big {
        flex-direction: column;
        justify-content: flex-start;
        width: 54px;
        padding-top: 2px;
        line-height: 13px;
    }

    .big svg:first-child {
        margin-bottom: 6px;
    }

    .rows {
        display: flex;
        flex-direction: column;
        align-items: flex-start;
    }

    .row {
        gap: 4px;
        height: 22px;
    }

    .off {
        color: #999;
    }

    .tools {
        flex-direction: column;
        gap: 8px;
        padding: 10px 5px 0;
    }

    .tool-row {
        display: flex;
        align-items: center;
        justify-content: space-between;
        height: 22px;
        color: #111;
    }

    .wide {
        padding-left: 5px;
    }

    .letters {
        display: flex;
        gap: 11px;
    }

    .combo {
        display: flex;
        position: relative;
        align-items: center;
        box-sizing: border-box;
        height: 22px;
        border: 1px solid #c3c7cc;
        background: #fff;
    }

    .combo select {
        width: 100%;
        padding: 0 14px 0 2px;
        appearance: none;
    }

    .combo :global(.down) {
        position: absolute;
        right: 4px;
        pointer-events: none;
    }

    .family {
        width: 87px;
    }

    .size {
        width: 54px;
        margin-left: -7px;
    }

    .sep {
        width: 1px;
        height: 20px;
        background: #d3d6da;
    }

    .long {
        height: 62px;
        margin: 0 4px 0 7px;
    }

    .serif {
        font: bold 16px/20px 'Liberation Serif', serif;
    }

    .grow svg,
    .shrink svg {
        margin-bottom: 10px;
    }

    .shrink {
        font-size: 13px;
    }

    .case {
        gap: 1px;
        font-size: 15px;
    }

    .small {
        font-size: 14px;
    }

    sub,
    sup {
        color: #3567ac;
        font-size: 8px;
        line-height: 10px;
    }

    sub {
        align-self: flex-end;
    }

    sup {
        align-self: flex-start;
    }

    .glow {
        color: #e9f5fc;
        font: bold 18px/20px 'Liberation Sans', sans-serif;
        -webkit-text-stroke: 1px #62a8d8;
        text-shadow: 0 0 3px #8ccbf0;
    }

    .marker {
        height: 18px;
        border-bottom: 4px solid #fff200;
        font-size: 10px;
    }

    .marker span {
        background: #f2ec6a;
        line-height: 12px;
    }

    .tint {
        height: 18px;
        border-bottom: 4px solid #d81e1e;
        color: #2f5c9e;
        line-height: 14px;
    }

    .pilcrow {
        font-size: 18px;
    }

    .tool-row .on {
        width: 22px;
        height: 22px;
        border: 1px solid #c29a3c;
        border-radius: 3px;
        background: #fbd96a;
    }

    .gallery {
        display: flex;
        flex: 1;
        box-sizing: border-box;
        height: 60px;
        margin: 2px 4px 0 2px;
        border: 1px solid #c3c7cc;
        background: #fff;
    }

    .style {
        flex: 1 1 0;
        flex-direction: column;
        gap: 6px;
        width: 72px;
        padding-top: 8px;
    }

    .sample {
        overflow: hidden;
        width: 60px;
        color: #111;
        font-size: 12px;
        text-align: left;
    }

    .heading {
        color: #444;
        font-style: italic;
    }

    .subtle {
        color: #888;
        font-style: italic;
    }

    .emphasis {
        font-style: italic;
    }

    .intense {
        color: #4f81bd;
        font-style: italic;
        font-weight: 600;
    }

    .lined {
        text-decoration: underline;
    }

    .strong,
    .bold {
        font-weight: 600;
    }

    .reference {
        color: #c0504d;
        font-size: 11px;
        text-decoration: underline;
    }

    .scroller {
        display: flex;
        flex-direction: column;
        width: 14px;
        border-left: 1px solid #c3c7cc;
    }

    .scroller button {
        flex: 1;
    }

    .scroller button + button {
        border-top: 1px solid #c3c7cc;
    }

    .consultant .big {
        width: 68px;
    }

    .search {
        flex: 1;
    }

    .search label {
        line-height: 21px;
    }

    .search-row {
        display: flex;
        gap: 4px;
        width: 100%;
        height: 22px;
    }

    .search-box {
        display: flex;
        flex: 1;
        border: 1px solid #c3c7cc;
        background: #fff;
    }

    .search-box input {
        flex: 1;
        min-width: 0;
        outline: 0;
    }

    .search-box button {
        width: 14px;
    }

    main {
        display: flex;
        flex: 1;
        min-height: 0;
        background: linear-gradient(#ced2d7, #b7bbc0);
    }

    aside {
        width: 24px;
        background: linear-gradient(90deg, #c8cdd5, #cfd3d9);
        overflow: hidden;
    }

    .tab-kind {
        box-sizing: border-box;
        width: 24px;
        height: 24px;
        margin: 3px 0 0;
        border: 1px solid #858c94;
        background: #ccd0d6;
    }

    .side-ruler {
        display: block;
        margin-left: 5px;
    }

    .side-ruler text,
    .top-ruler text {
        fill: #555;
        font-size: 9px;
        text-anchor: middle;
    }

    .desk {
        display: flex;
        flex: 1;
        justify-content: center;
        gap: 15px;
        overflow: hidden;
    }

    .page {
        box-sizing: border-box;
        width: 712px;
        padding: 0 27px 0 43px;
        background: #fff;
        box-shadow: 0 0 8px #6d7278;
        color: #000;
        font: 17px/22px 'Liberation Serif', serif;
    }

    .desk > .page {
        margin-top: 27px;
        clip-path: inset(0 -10px);
    }

    .sheet {
        display: flex;
        flex-direction: column;
    }

    .top-ruler {
        display: block;
        margin-left: -1px;
    }

    .sheet .page {
        flex: 1;
        min-height: 0;
        overflow: hidden;
        clip-path: inset(0 -10px);
    }

    h2,
    h3 {
        font-size: 17px;
        text-align: center;
    }

    h2 {
        line-height: 21px;
    }

    .subject {
        line-height: 19px;
        text-align: center;
    }

    .date {
        padding: 6px 0 4px;
        text-align: right;
    }

    .remote {
        color: #d01c1c;
    }

    .present {
        padding-left: 66px;
    }

    .names {
        padding: 8px 0 7px;
        text-decoration: underline;
    }

    .line {
        display: block;
    }

    .fill {
        text-align-last: justify;
    }

    .minutes {
        padding-left: 44px;
    }

    .minutes li {
        display: grid;
        grid-template-columns: 27px minmax(0, 1fr);
    }

    .minutes .agenda-first {
        grid-template-columns: 43px minmax(0, 1fr);
    }

    .minutes .agenda-second {
        grid-template-columns: 15px minmax(0, 1fr);
    }

    .minutes h3 {
        padding-top: 8px;
    }

    .signature {
        padding-top: 11px;
        text-align: center;
    }

    .spell {
        text-decoration: underline wavy #e03030 1px;
        text-decoration-skip-ink: none;
    }

    .grammar {
        text-decoration: underline wavy #2f9a3a 1px;
        text-decoration-skip-ink: none;
    }

    .caret {
        position: absolute;
        width: 1px;
        height: 11px;
        background: #000;
    }

    .report {
        padding: 0 36px 0 50px;
    }

    .report h2 {
        line-height: 20px;
    }

    table {
        width: 626px;
        border-collapse: collapse;
        table-layout: fixed;
        font-size: 12px;
        line-height: 13px;
    }

    .c0 {
        width: 16px;
    }

    .c1 {
        width: 89px;
    }

    .c2 {
        width: 43px;
    }

    .c3 {
        width: 298px;
    }

    .c4 {
        width: 55px;
    }

    .c5 {
        width: 31px;
    }

    .c6 {
        width: 63px;
    }

    .c7 {
        width: 30px;
    }

    td,
    th {
        padding: 6px;
        border: 1px solid #000;
        vertical-align: top;
    }

    thead th,
    thead td {
        padding: 0;
        font-weight: 400;
    }

    thead .first {
        line-height: 12px;
    }

    thead .name,
    thead .code {
        padding: 0 7px;
        line-height: 13px;
        text-align: left;
        white-space: normal;
    }

    .person {
        padding: 6px 0 6px 7px;
    }

    .what.tall {
        padding-bottom: 5px;
        line-height: 14px;
    }

    .score {
        text-align: center;
        vertical-align: middle;
        white-space: normal;
    }

    .top {
        vertical-align: top;
        white-space: nowrap;
    }

    .tight td {
        padding-top: 0;
        padding-bottom: 1px;
    }

    .absent {
        background: #f00;
    }

    table li {
        display: grid;
        grid-template-columns: 21px minmax(0, 1fr);
        padding-left: 22px;
    }

    .scrollbar {
        display: flex;
        flex-direction: column;
        align-items: center;
        width: 17px;
        background: #dde1e9;
    }

    .scrollbar button {
        width: 17px;
        height: 17px;
    }

    .split {
        width: 10px;
        height: 2px;
        margin: 5px 0 2px;
        background: #7b828b;
    }

    .scrollbar .ruler-toggle {
        box-sizing: border-box;
        border: 1px solid #858c94;
    }

    .track {
        flex: 1;
        width: 100%;
        padding: 18px 0 112px;
    }

    .thumb {
        display: flex;
        align-items: center;
        justify-content: center;
        box-sizing: border-box;
        height: 100%;
        border: 1px solid #858c94;
        background: linear-gradient(90deg, #f4f6fa, #d6dbe4);
    }

    .browse {
        border-top: 1px solid #b3b8be;
    }

    .status {
        display: flex;
        flex: none;
        align-items: center;
        box-sizing: border-box;
        height: 22px;
        padding-right: 4px;
        border-top: 1px solid #8d939a;
        background: linear-gradient(#e2e5e9, #c3c7cc);
    }

    .cell {
        display: flex;
        align-items: center;
        height: 20px;
        padding: 0 8px;
        border-right: 1px solid #8d939a;
    }

    .language {
        padding-left: 17px;
    }

    .spacer {
        flex: 1;
    }

    .views {
        display: flex;
        padding-left: 4px;
        border-left: 1px solid #8d939a;
    }

    .views button {
        box-sizing: border-box;
        width: 18px;
        height: 19px;
    }

    .views .on {
        border: 1px solid #c29a3c;
        border-radius: 3px;
        background: #fbd96a;
    }

    .percent {
        padding: 0 8px 0 10px;
    }

    .zoom {
        display: flex;
        align-items: center;
    }

    input[type='range'] {
        width: 100px;
        height: 16px;
        margin: 0;
        background: linear-gradient(#8d939a, #8d939a) center / 100% 1px no-repeat;
        appearance: none;
    }

    input[type='range']::-webkit-slider-thumb {
        width: 9px;
        height: 13px;
        border: 1px solid #666;
        border-radius: 1px 1px 5px 5px;
        background: #f4f5f7;
        appearance: none;
    }

    .taskbar {
        display: flex;
        flex: none;
        gap: 1px;
        height: 40px;
        background: linear-gradient(90deg, #2c241e, #241f1c 20%, #3a3024 28%, #30271d 38%, #2f231a 60%, #25201e 80%, #292320);
        color: #fff;
    }

    .taskbar button {
        position: relative;
        width: 48px;
        height: 40px;
    }

    .open::after {
        content: '';
        position: absolute;
        inset: auto 4px 0;
        height: 2px;
        background: #76b0e4;
    }

    .taskbar .active {
        background: #55504c;
    }

    .active::after {
        inset: auto 0 0;
    }

    .tray {
        display: flex;
        align-items: center;
        gap: 8px;
        padding-right: 24px;
    }

    .tray time {
        display: flex;
        flex-direction: column;
        align-items: center;
        margin: 0 10px 0 6px;
        line-height: 17px;
    }
</style>
